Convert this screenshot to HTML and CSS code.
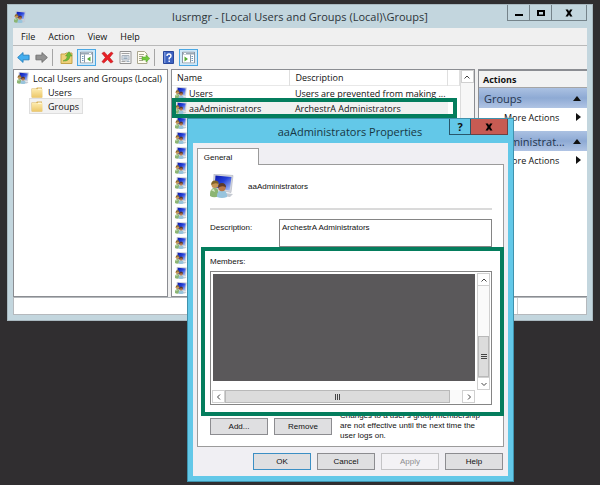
FILE: index.html
```html
<!DOCTYPE html>
<html lang="en">
<head>
<meta charset="utf-8">
<title>lusrmgr</title>
<link rel="stylesheet" href="styles.css">
</head>
<body>
<svg class="defs" aria-hidden="true">
  <defs>
    <linearGradient id="screen" x1="0" y1="0" x2="1" y2="1">
      <stop offset="0" stop-color="#0c18a8"/><stop offset=".45" stop-color="#2440d8"/><stop offset="1" stop-color="#b8d0fa"/>
    </linearGradient>
    <linearGradient id="fold" x1="0" y1="0" x2="0" y2="1">
      <stop offset="0" stop-color="#fdebae"/><stop offset="1" stop-color="#ecc768"/>
    </linearGradient>
    <symbol id="users" viewBox="0 0 24 24">
      <path d="M4 0 23 1.500 21 18.500 3 15Z" fill="#d3d5dc" stroke="#aeb2c0" stroke-width=".6"/>
      <path d="M5.500 1.500 21.500 3 19.700 16.500 4.500 13.500Z" fill="url(#screen)"/>
      <path d="M15 19 23 20 20 23 12 22Z" fill="#c5cad2"/>
      <path d="M0 22Q-.5 14 5 14Q9 14 9 22Q4 24.500 0 22Z" fill="#8cb573"/>
      <path d="M1 16 4 15 5 18Z" fill="#d8e9c8"/>
      <circle cx="5" cy="10.500" r="3.600" fill="#c69655"/>
      <path d="M1.300 11Q1 6.500 5 6.500T8.500 10Q5 8 1.300 11Z" fill="#806228"/>
      <path d="M7 23Q6.500 16.500 12 16.500T17 23Q12 25 7 23Z" fill="#98c4dd"/>
      <circle cx="12" cy="13.500" r="3.700" fill="#b87849"/>
      <path d="M8 14Q8 9 12 9T16 13.500Q12 11 8 14Z" fill="#5c3a2a"/>
    </symbol>
    <symbol id="folder" viewBox="0 0 12 11">
      <path d="M.5 1.500H5L6 .5H11V10.500H.5Z" fill="#d9b45c"/>
      <path d="M1 2H11.500V10.500H1Z" fill="url(#fold)"/>
      <path d="M7 1.500H10.500V3H7Z" fill="#fff6d8"/>
    </symbol>
    <symbol id="pane" viewBox="0 0 13 12">
      <path d="M.5.5H12.500V11.500H.5Z" fill="#fff" stroke="#8c98a4"/>
      <path d="M1 1H12V3H1Z" fill="#9aa8b6"/>
      <path d="M9 1.500H11V2.500H9Z" fill="#fff"/>
      <path d="M4.500 3V11" stroke="#8c98a4"/>
      <path d="M2 5H3.500M2 7H3.500M2 9H3.500" stroke="#6c9bc0"/>
      <path d="M10.500 5V10L7 7.500Z" fill="#55ad35"/>
    </symbol>
  </defs>
</svg>

<main class="console">
  <header class="console-title">
    <svg class="ico-sm"><use href="#users"/></svg>
    <h1>lusrmgr - [Local Users and Groups (Local)\Groups]</h1>
    <div class="caption-buttons">
      <button aria-label="Minimize"><svg viewBox="0 0 8 8"><path d="M0 5H8V7H0Z"/></svg></button>
      <button aria-label="Maximize"><svg viewBox="0 0 8 8"><path d="M0 1H8V7H0ZM2 3V5.500H6V3Z" fill-rule="evenodd"/></svg></button>
      <button class="wide" aria-label="Close"><svg viewBox="0 0 8 8"><path d="M.5.500H3L4 2.500 5 .5H7.500L5.300 4 7.500 7.500H5L4 5.500 3 7.500H.5L2.700 4Z"/></svg></button>
    </div>
  </header>
  <div class="client">
    <nav class="menu"><button>File</button><button>Action</button><button>View</button><button>Help</button></nav>
    <div class="toolbar">
      <button aria-label="Back"><svg viewBox="0 0 14 12"><path d="M.7 6 6.500.7V3.500H13V8.500H6.500V11.300Z" fill="#42aef0" stroke="#2781bd"/></svg></button>
      <button aria-label="Forward"><svg viewBox="0 0 14 12"><path d="M13.300 6 7.500.7V3.500H1V8.500H7.500V11.300Z" fill="#929292" stroke="#6f6f6f"/></svg></button>
      <i class="sep"></i>
      <button aria-label="Up one level"><svg viewBox="0 0 13 13"><path d="M1 3H5L6 2H12V12.500H1Z" fill="#efd07a" stroke="#c5a349"/><path d="M3 10Q7 9 7.500 5H5.500L9 .7 12 5H10Q9.500 10.500 3 10Z" fill="#6dbb36" stroke="#4e9427" stroke-width=".5"/></svg></button>
      <button class="on" aria-label="Show console tree"><svg viewBox="0 0 13 12"><use href="#pane"/></svg></button>
      <button aria-label="Delete"><svg viewBox="0 0 14 13"><path d="M1 2 3.500.5 7 4.300 11 .7 13 2 9.300 6.500 13 11 10.500 12.500 7 8.700 3 12.500 1 11 4.700 6.500Z" fill="#e82026" stroke="#b9151c" stroke-width=".6"/></svg></button>
      <button aria-label="Properties"><svg viewBox="0 0 12 13"><path d="M.5.500H11.500V12.500H.5Z" fill="#f8f8f8" stroke="#949494"/><path d="M2 2.500H10M2 10.500H6" stroke="#a3a3a3"/><path d="M2.500 4.500H9.500V9H2.500Z" fill="#e4eaf0" stroke="#a8b2bc"/><path d="M4 6H8M4 7.500H8M7 10.500H10" stroke="#7890a6" stroke-width=".7"/></svg></button>
      <button aria-label="Export list"><svg viewBox="0 0 13 13"><path d="M.5.500H7.500L10 3V12.500H.5Z" fill="#fffdf0" stroke="#aaa68e"/><path d="M2 3.500H7M2 5.500H6M2 7.500H5M2 9.500H6" stroke="#a9a791"/><path d="M5 6H9V4L12.800 7.500 9 11V9H5Z" fill="#71c93d" stroke="#56a52c" stroke-width=".5"/></svg></button>
      <i class="sep"></i>
      <button aria-label="Help"><svg viewBox="0 0 11 13"><path d="M.5.500H10.500V12.500H.5Z" fill="#3c62c0" stroke="#29479c"/><path d="M1 1H2.500V12H1Z" fill="#7593dc"/><path d="M4 5Q4 3 6 3T8 5Q8 6 6.200 7.200V8.500M6.200 9.500V11" fill="none" stroke="#fff" stroke-width="1.400"/></svg></button>
      <button class="on" aria-label="Show action pane"><svg class="flip" viewBox="0 0 13 12"><use href="#pane"/></svg></button>
    </div>
    <div class="panes">
      <section class="pane tree">
        <div class="node"><svg class="ico-sm"><use href="#users"/></svg><span>Local Users and Groups (Local)</span></div>
        <div class="node child"><svg class="ico-folder"><use href="#folder"/></svg><span>Users</span></div>
        <div class="node child selected"><svg class="ico-folder"><use href="#folder"/></svg><span>Groups</span></div>
      </section>
      <section class="pane list">
        <table>
          <thead><tr><th class="c-name">Name</th><th class="c-desc">Description</th><th></th></tr></thead>
          <tbody>
            <tr><td><svg class="ico-row"><use href="#users"/></svg>Users</td><td>Users are prevented from making ...</td><td></td></tr>
            <tr class="picked"><td><svg class="ico-row"><use href="#users"/></svg>aaAdministrators</td><td>ArchestrA Administrators</td><td></td></tr>
            <tr><td><svg class="ico-row"><use href="#users"/></svg></td><td></td><td></td></tr>
            <tr><td><svg class="ico-row"><use href="#users"/></svg></td><td></td><td></td></tr>
            <tr><td><svg class="ico-row"><use href="#users"/></svg></td><td></td><td></td></tr>
            <tr><td><svg class="ico-row"><use href="#users"/></svg></td><td></td><td></td></tr>
            <tr><td><svg class="ico-row"><use href="#users"/></svg></td><td></td><td></td></tr>
            <tr><td><svg class="ico-row"><use href="#users"/></svg></td><td></td><td></td></tr>
            <tr><td><svg class="ico-row"><use href="#users"/></svg></td><td></td><td></td></tr>
            <tr><td><svg class="ico-row"><use href="#users"/></svg></td><td></td><td></td></tr>
            <tr><td><svg class="ico-row"><use href="#users"/></svg></td><td></td><td></td></tr>
            <tr><td><svg class="ico-row"><use href="#users"/></svg></td><td></td><td></td></tr>
            <tr><td><svg class="ico-row"><use href="#users"/></svg></td><td></td><td></td></tr>
            <tr><td><svg class="ico-row"><use href="#users"/></svg></td><td></td><td></td></tr>
          </tbody>
        </table>
        <div class="vbar"><button aria-label="Scroll up"><svg viewBox="0 0 6 6"><path d="M.5 4.500 3 2 5.500 4.500"/></svg></button></div>
        <div class="mark mark-row"></div>
      </section>
      <section class="pane actions">
        <h2>Actions</h2>
        <div class="band"><span>Groups</span><i class="up"></i></div>
        <button class="more"><span>More Actions</span><i class="right"></i></button>
        <div class="band"><span>aaAdministrat...</span><i class="up"></i></div>
        <button class="more"><span>More Actions</span><i class="right"></i></button>
      </section>
    </div>
    <footer class="status"><span></span><span></span></footer>
  </div>
</main>

<section class="dialog" role="dialog" aria-labelledby="dlg-title">
  <header class="dialog-title">
    <h2 id="dlg-title">aaAdministrators Properties</h2>
    <div class="caption-buttons">
      <button class="q" aria-label="Help">?</button>
      <button class="close" aria-label="Close"><svg viewBox="0 0 8 8"><path d="M.5.500H3L4 2.500 5 .5H7.500L5.300 4 7.500 7.500H5L4 5.500 3 7.500H.5L2.700 4Z"/></svg></button>
    </div>
  </header>
  <div class="dialog-body">
    <button class="tab">General</button>
    <div class="sheet">
      <div class="who"><svg class="ico-lg"><use href="#users"/></svg><span>aaAdministrators</span></div>
      <div class="field">
        <label for="desc">Description:</label>
        <textarea id="desc">ArchestrA Administrators</textarea>
      </div>
      <div class="members">
        <h3>Members:</h3>
        <div class="box">
          <div class="cover"></div>
          <div class="vscroll">
            <button aria-label="Scroll up"><svg viewBox="0 0 6 6"><path d="M.5 4.500 3 2 5.500 4.500"/></svg></button>
            <div class="vthumb"><i></i></div>
            <button aria-label="Scroll down"><svg viewBox="0 0 6 6"><path d="M.5 2 3 4.500 5.500 2"/></svg></button>
          </div>
          <div class="hscroll">
            <button aria-label="Scroll left"><svg viewBox="0 0 6 6"><path d="M4 .5 1.500 3 4 5.500"/></svg></button>
            <div class="hthumb"><i></i></div>
            <button aria-label="Scroll right"><svg viewBox="0 0 6 6"><path d="M2 .5 4.500 3 2 5.500"/></svg></button>
          </div>
        </div>
        <div class="mark mark-members"></div>
      </div>
      <div class="edit">
        <button class="btn">Add...</button>
        <button class="btn">Remove</button>
        <p>Changes to a user's group membership<br>are not effective until the next time the<br>user logs on.</p>
      </div>
    </div>
    <div class="buttons">
      <button class="btn default">OK</button>
      <button class="btn">Cancel</button>
      <button class="btn" disabled>Apply</button>
      <button class="btn">Help</button>
    </div>
  </div>
</section>
</body>
</html>
```

FILE: styles.css
```css
* { box-sizing: border-box; }

body {
  margin: 0;
  min-height: 100vh;
  position: relative;
  overflow: hidden;
  background: #302e30;
  color: #111;
  font: 9px/15px "Open Sans", "Noto Sans", sans-serif;
}

button { font: inherit; color: inherit; margin: 0; padding: 0; border: 0; background: none; }
h1, h2, h3, p { margin: 0; font: inherit; }
svg { display: block; flex: none; }
.defs { position: absolute; width: 0; height: 0; }

/* Console window */
.console {
  position: absolute;
  top: 4px;
  left: 7px;
  right: 7px;
  padding: 0 5px 5px;
  border: 1px solid #a9b9c0;
  background: #c3d6de;
}
.console-title { display: flex; align-items: center; height: 23px; padding-left: 1px; position: relative; }
.console-title h1 { flex: 1; text-align: center; font-size: 11px; color: #2c3439; padding-left: 67px; }
.caption-buttons { display: flex; align-self: flex-start; }
.caption-buttons svg { width: 8px; height: 8px; }
.caption-buttons button { display: grid; place-items: center; }
.console .caption-buttons button { width: 22px; height: 16px; border: 1px solid #75838a; border-top: 0; border-right: 0; }
.console .caption-buttons .wide { width: 36px; border-right: 1px solid #75838a; }

.ico-sm { width: 12px; height: 12px; }
.ico-row { width: 12px; height: 12px; }
.ico-folder { width: 12px; height: 11px; }
.ico-lg { width: 24px; height: 24px; }

.client { background: #f0f0f0; }
.menu { display: flex; gap: 13px; padding: 0 8px; height: 17px; align-items: center; }
.toolbar { display: flex; align-items: center; height: 24px; padding: 0 3px; gap: 4px; border-top: 1px solid #b9b9b9; }
.toolbar button { display: grid; place-items: center; height: 17px; width: 14px; }
.toolbar button svg { width: 13px; height: 13px; }
.toolbar .on { width: 19px; border: 1px solid #4ba8e4; background: #cfe8f8; }
.toolbar .sep { width: 1px; height: 17px; margin-right: 2px; background: #a5a5a5; }
.flip { transform: scaleX(-1); }

.panes { display: grid; grid-template-columns: 27fr 53fr 19fr; gap: 3px; }
.pane { background: #fff; border: 1px solid #8b8d92; min-width: 0; position: relative; }
.tree { padding: 1px 3px; }
.node { display: flex; align-items: center; gap: 4px; height: 14px; white-space: nowrap; }
.child { width: max-content; margin-left: 13px; padding: 0 3px 0 1px; }
.child .ico-folder { margin-right: 1px; }
.selected { background: #f2f2f2; outline: 1px solid #dedede; }

.list { display: flex; }
.list table { flex: 1; width: 100%; min-width: 0; table-layout: fixed; border-collapse: collapse; align-self: flex-start; }
.list th, .list td { padding: 0 0 0 5px; height: 15px; line-height: 15px; font-weight: 400; text-align: left; white-space: nowrap; overflow: hidden; }
.list th { border-right: 1px solid #dfdfdf; }
.list thead tr { border-bottom: 1px solid #e8e8e8; }
.c-name { width: 118px; }
.c-desc { width: 158px; }
.list td svg { display: inline-block; vertical-align: -2px; margin-right: 2px; }
.list td:first-child { padding-left: 3px; }
.picked td:not(:last-child) { background: #f0f0f0; }
.vbar { width: 14px; flex: none; border-left: 1px solid #dcdcdc; background: #f7f7f7; }
.vbar button, .vscroll button, .hscroll button { display: grid; place-items: center; width: 13px; height: 13px; background: #fff; border: 1px solid #d0d0d0; }
.vbar svg, .vscroll svg, .hscroll svg { width: 6px; height: 6px; fill: none; stroke: #444; }

.mark { position: absolute; border: 4px solid #047d5d; pointer-events: none; }
.mark-row { top: 28px; left: 0; right: 17px; height: 20px; }

.actions { border-right: 0; border-top-width: 2px; }
.actions h2 { height: 17px; line-height: 17px; padding-left: 4px; font-weight: 700; background: #f2f2f2; border-bottom: 1px solid #a5a5a5; }
.band { display: flex; align-items: center; justify-content: space-between; height: 20px; padding: 0 6px 0 5px; font-size: 11px; color: #24344e; white-space: nowrap; background: linear-gradient(#abc1e2, #8eaad4 50%, #b0c4e4); }
.more { display: flex; align-items: center; justify-content: space-between; width: 100%; height: 18px; margin-bottom: 5px; padding: 0 6px 0 25px; }
.up { border: solid transparent; border-width: 0 4px 5px; border-bottom-color: #111; }
.right { border: solid transparent; border-width: 4px 0 4px 5px; border-left-color: #111; }

.status { display: flex; height: 18px; background: #fff; border: 1px solid #b5b9bd; }
.status span:first-child { flex: 1; border-right: 1px solid #cfcfcf; }
.status span:last-child { width: 68px; }

/* Properties dialog */
.dialog {
  position: absolute;
  top: 118px;
  left: 187px;
  right: 86px;
  padding: 0 5px 5px;
  border: 1px solid #3f92ad;
  background: #63c8e8;
  font: 8px/11px "Liberation Sans", Arial, sans-serif;
}
.dialog-title { display: flex; align-items: center; height: 24px; font-family: "Open Sans", "Noto Sans", sans-serif; position: relative; }
.dialog-title h2 { flex: 1; text-align: center; font-size: 11px; color: #173743; padding-left: 58px; }
.dialog .caption-buttons button { height: 16px; border: 1px solid #28576b; border-top: 0; }
.dialog .q { width: 22px; font-size: 11px; font-weight: 700; }
.dialog .caption-buttons .close { width: 37px; background: #c75b53; border-color: #6e4144; border-left: 0; }
.dialog-body { background: #f0eff3; padding: 5px 4px 6px; }
.tab { display: block; width: 62px; height: 17px; background: #fff; border: 1px solid #9b9b9b; border-bottom: 0; margin-bottom: -1px; padding-right: 20px; position: relative; z-index: 1; }
.sheet { background: #fff; border: 1px solid #9b9b9b; padding: 9px 11px 5px 12px; }
.who { display: flex; align-items: center; gap: 14px; padding-bottom: 10px; border-bottom: 2px solid #dadada; }
.field { display: flex; gap: 4px; margin-top: 9px; }
.field label { width: 65px; line-height: 18px; }
.field textarea { flex: 1; min-width: 0; height: 28px; padding: 2px; border: 1px solid #858585; border-radius: 0; background: #fff; color: inherit; font: inherit; resize: none; overflow: hidden; display: block; }
.members { position: relative; padding-top: 9px; }
.members h3 { line-height: 11px; }
.mark-members { top: 0; bottom: -11px; left: -9px; right: -12px; }
.box { display: grid; grid-template-columns: 1fr 13px; grid-template-rows: 117px 13px; column-gap: 2px; margin-top: 4px; padding: 1px; border: 1px solid #858585; }
.cover { background: #5a585a; margin: 1px 0 9px 1px; }
.vscroll { display: flex; flex-direction: column; background: #fafafa; border: 1px solid #d0d0d0; border-width: 0 1px; }
.vscroll button { width: auto; border-width: 1px 0; }
.vthumb { margin-top: auto; height: 41px; display: grid; place-items: center; background: #dcdcdc; border: 1px solid #b9b9b9; }
.vthumb i { width: 6px; height: 6px; background: repeating-linear-gradient(#444 0 1px, transparent 1px 2px); }
.hscroll { display: flex; background: #fafafa; }
.hthumb { flex: 1; margin-right: 12px; display: grid; place-items: center; background: #dcdcdc; border: 1px solid #b9b9b9; }
.hthumb i { width: 6px; height: 6px; background: repeating-linear-gradient(90deg, #444 0 1px, transparent 1px 2px); }

.edit { display: flex; align-items: flex-end; gap: 6px; }
.edit .btn { margin-bottom: 6px; }
.edit p { line-height: 10px; white-space: nowrap; margin-left: 2px; padding-top: 6px; }
.btn { width: 58px; height: 17px; flex: none; background: #dfdfe1; border: 1px solid #8c8c90; }
.btn.default { border-color: #3c8fc4; }
.btn:disabled { background: #f3f2f5; border-color: #c4c4c6; color: #8d8d90; }
.buttons { display: flex; justify-content: flex-end; gap: 6px; padding: 6px 1px 0 0; }
```
